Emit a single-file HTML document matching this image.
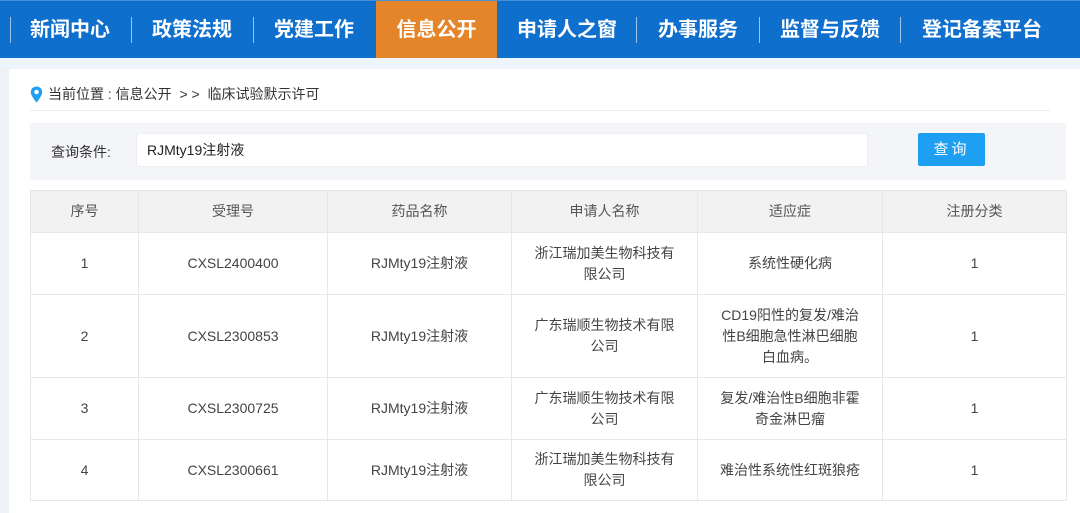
<!DOCTYPE html>
<html><head><meta charset="utf-8"><style>
*{margin:0;padding:0;box-sizing:border-box}
body{width:1080px;height:513px;overflow:hidden;background:#fff;font-family:"Liberation Sans","Noto Sans CJK SC",sans-serif;position:relative}
.nav{position:absolute;left:0;top:0;width:1080px;height:58px;background:#0f6fcd;border-top:1px solid #4a8fd8}
.nav span{position:absolute;top:0;height:58px;line-height:58px;color:#fff;font-size:20px;font-weight:bold}
.sep{position:absolute;top:16px;width:1px;height:26px;background:#9cc3ec}
.band{position:absolute;left:0;top:58px;width:1080px;height:11px;background:#eef4fc}
.lstrip{position:absolute;left:0;top:69px;width:9px;height:444px;background:#eef2f8}
.bc{position:absolute;left:48px;top:84px;font-size:14px;color:#333}
.line{position:absolute;left:30px;top:110px;width:1020px;height:1px;background:#e8ebef}
.panel{position:absolute;left:30px;top:123px;width:1036px;height:57px;background:#f3f5f9}
.lbl{position:absolute;left:51px;top:142px;font-size:14px;color:#333}
.inp{position:absolute;left:136px;top:133px;width:732px;height:34px;background:#fff;border:1px solid #eceef2;border-radius:3px;padding-left:10px;line-height:32px;font-size:14px;color:#222}
.btn{position:absolute;left:918px;top:133px;width:67px;height:33px;background:#1e9ff2;border-radius:2px;color:#fff;font-size:15px;text-align:center;line-height:33px;letter-spacing:3px}
table{position:absolute;left:30px;top:190px;border-collapse:collapse;font-size:14px;color:#444}
td,th{border:1px solid #e5e7ea;text-align:center;vertical-align:middle;line-height:21px;font-weight:normal}
th{background:#f2f2f2;height:42px;color:#555}
</style></head><body>
<div class="nav">
<div class="sep" style="left:10px"></div>
<span style="left:30px">新闻中心</span><div class="sep" style="left:131px"></div>
<span style="left:152px">政策法规</span><div class="sep" style="left:253px"></div>
<span style="left:274px">党建工作</span>
<span style="left:376px;width:121px;background:#e5852a;text-align:center">信息公开</span>
<span style="left:517px">申请人之窗</span><div class="sep" style="left:636px"></div>
<span style="left:658px">办事服务</span><div class="sep" style="left:759px"></div>
<span style="left:780px">监督与反馈</span><div class="sep" style="left:900px"></div>
<span style="left:922px">登记备案平台</span>
</div>
<div class="band"></div><div class="lstrip"></div>
<svg style="position:absolute;left:30px;top:86px" width="13" height="17" viewBox="0 0 13 17"><path d="M6.5 0.5C3.2 0.5 0.8 3 0.8 6c0 4 5.7 10.5 5.7 10.5S12.2 10 12.2 6C12.2 3 9.8 0.5 6.5 0.5z" fill="#1e9ff2"/><circle cx="6.5" cy="6" r="2.3" fill="#fff"/></svg>
<div class="bc">当前位置 : 信息公开 &nbsp;&gt; &gt; &nbsp;临床试验默示许可</div>
<div class="line"></div>
<div class="panel"></div>
<div class="lbl">查询条件:</div>
<div class="inp">RJMty19注射液</div>
<div class="btn">查询</div>
<table>
<tr><th style="width:108px">序号</th><th style="width:189px">受理号</th><th style="width:184px">药品名称</th><th style="width:186px">申请人名称</th><th style="width:185px">适应症</th><th style="width:184px">注册分类</th></tr>
<tr style="height:62px"><td>1</td><td>CXSL2400400</td><td>RJMty19注射液</td><td>浙江瑞加美生物科技有<br>限公司</td><td>系统性硬化病</td><td>1</td></tr>
<tr style="height:83px"><td>2</td><td>CXSL2300853</td><td>RJMty19注射液</td><td>广东瑞顺生物技术有限<br>公司</td><td>CD19阳性的复发/难治<br>性B细胞急性淋巴细胞<br>白血病。</td><td>1</td></tr>
<tr style="height:62px"><td>3</td><td>CXSL2300725</td><td>RJMty19注射液</td><td>广东瑞顺生物技术有限<br>公司</td><td>复发/难治性B细胞非霍<br>奇金淋巴瘤</td><td>1</td></tr>
<tr style="height:61px"><td>4</td><td>CXSL2300661</td><td>RJMty19注射液</td><td>浙江瑞加美生物科技有<br>限公司</td><td>难治性系统性红斑狼疮</td><td>1</td></tr>
</table>
</body></html>
